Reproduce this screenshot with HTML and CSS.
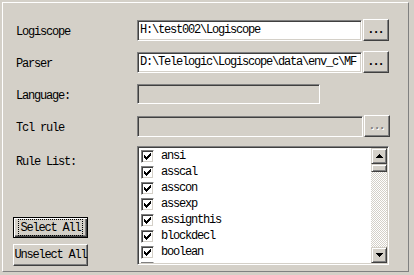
FILE: index.html
```html
<!DOCTYPE html>
<html>
<head>
<meta charset="utf-8">
<link rel="stylesheet" href="styles.css">
</head>
<body>
<div class="frame">
  <div class="row">
    <span class="label">Logiscope</span>
    <div class="ctl">
      <div class="field w-long">H:\test002\Logiscope</div>
      <div class="btn">...</div>
    </div>
  </div>
  <div class="row">
    <span class="label">Parser</span>
    <div class="ctl">
      <div class="field w-long">D:\Telelogic\Logiscope\data\env_c\MF</div>
      <div class="btn">...</div>
    </div>
  </div>
  <div class="row">
    <span class="label">Language:</span>
    <div class="ctl">
      <div class="field disabled w-short"></div>
    </div>
  </div>
  <div class="row">
    <span class="label">Tcl rule</span>
    <div class="ctl">
      <div class="field disabled w-tcl"></div>
      <div class="btn btn-disabled">...</div>
    </div>
  </div>
  <div class="row list-row">
    <div class="left">
      <span class="label rule-label">Rule List:</span>
      <div class="pbtn default"><span class="focus">Select All</span></div>
      <div class="pbtn unsel">Unselect All</div>
    </div>
    <div class="listbox">
      <ul class="items">
        <li><span class="cb"><svg width="7" height="7" viewBox="0 0 7 7" shape-rendering="crispEdges"><path d="M0 2h1v3H0zM1 3h1v3H1zM2 4h1v3H2zM3 3h1v3H3zM4 2h1v3H4zM5 1h1v3H5zM6 0h1v3H6z" fill="#000"/></svg></span>ansi</li>
        <li><span class="cb"><svg width="7" height="7" viewBox="0 0 7 7" shape-rendering="crispEdges"><path d="M0 2h1v3H0zM1 3h1v3H1zM2 4h1v3H2zM3 3h1v3H3zM4 2h1v3H4zM5 1h1v3H5zM6 0h1v3H6z" fill="#000"/></svg></span>asscal</li>
        <li><span class="cb"><svg width="7" height="7" viewBox="0 0 7 7" shape-rendering="crispEdges"><path d="M0 2h1v3H0zM1 3h1v3H1zM2 4h1v3H2zM3 3h1v3H3zM4 2h1v3H4zM5 1h1v3H5zM6 0h1v3H6z" fill="#000"/></svg></span>asscon</li>
        <li><span class="cb"><svg width="7" height="7" viewBox="0 0 7 7" shape-rendering="crispEdges"><path d="M0 2h1v3H0zM1 3h1v3H1zM2 4h1v3H2zM3 3h1v3H3zM4 2h1v3H4zM5 1h1v3H5zM6 0h1v3H6z" fill="#000"/></svg></span>assexp</li>
        <li><span class="cb"><svg width="7" height="7" viewBox="0 0 7 7" shape-rendering="crispEdges"><path d="M0 2h1v3H0zM1 3h1v3H1zM2 4h1v3H2zM3 3h1v3H3zM4 2h1v3H4zM5 1h1v3H5zM6 0h1v3H6z" fill="#000"/></svg></span>assignthis</li>
        <li><span class="cb"><svg width="7" height="7" viewBox="0 0 7 7" shape-rendering="crispEdges"><path d="M0 2h1v3H0zM1 3h1v3H1zM2 4h1v3H2zM3 3h1v3H3zM4 2h1v3H4zM5 1h1v3H5zM6 0h1v3H6z" fill="#000"/></svg></span>blockdecl</li>
        <li><span class="cb"><svg width="7" height="7" viewBox="0 0 7 7" shape-rendering="crispEdges"><path d="M0 2h1v3H0zM1 3h1v3H1zM2 4h1v3H2zM3 3h1v3H3zM4 2h1v3H4zM5 1h1v3H5zM6 0h1v3H6z" fill="#000"/></svg></span>boolean</li>
        <li><span class="cb"></span></li>
      </ul>
      <div class="vscroll">
        <div class="sbtn"><svg width="7" height="4" viewBox="0 0 7 4" shape-rendering="crispEdges"><path d="M3 0h1v1h1v1h1v1h1v1H0V3h1V2h1V1h1z" fill="#000"/></svg></div>
        <div class="thumb"></div>
        <div class="track"></div>
        <div class="sbtn"><svg width="7" height="4" viewBox="0 0 7 4" shape-rendering="crispEdges"><path d="M0 0h7v1H6v1H5v1H4v1H3V3H2V2H1V1H0z" fill="#000"/></svg></div>
      </div>
    </div>
  </div>
</div>
</body>
</html>
```
FILE: styles.css
```css
html, body {
  margin: 0;
  padding: 0;
}
body {
  background: #d4d0c8;
  font-family: "Liberation Mono", monospace;
  font-size: 12px;
  letter-spacing: -1.2px;
  color: #000;
  width: 414px;
  height: 275px;
  overflow: hidden;
}
.frame {
  box-sizing: border-box;
  margin: 2px 0 0 2px;
  width: 407px;
  height: 270px;
  border-top: 1px solid #fff;
  border-left: 1px solid #fff;
  border-right: 1px solid #808080;
  border-bottom: 1px solid #808080;
  padding: 16px 0 0 10px;
}
.row {
  display: grid;
  grid-template-columns: 124px auto;
  height: 22px;
  align-items: center;
  margin-bottom: 10px;
}
.label {
  padding-left: 3px;
  padding-top: 3px;
  white-space: nowrap;
}
.ctl {
  display: flex;
  align-items: center;
  gap: 1px;
}
.field {
  box-sizing: border-box;
  height: 21px;
  background: #fff;
  border-top: 1px solid #808080;
  border-left: 1px solid #808080;
  border-right: 1px solid #fff;
  border-bottom: 1px solid #fff;
  box-shadow: inset 1px 1px 0 #404040, inset -1px -1px 0 #d4d0c8;
  padding: 0 2px;
  line-height: 19px;
  white-space: nowrap;
  overflow: hidden;
}
.w-long { width: 225px; }
.w-short { width: 183px; height: 20px; }
.w-tcl { width: 226px; }
.field.disabled { background: #d4d0c8; }
.btn {
  box-sizing: border-box;
  width: 26px;
  height: 22px;
  border-top: 1px solid #fff;
  border-left: 1px solid #fff;
  border-right: 1px solid #404040;
  border-bottom: 1px solid #404040;
  box-shadow: inset -1px -1px 0 #808080;
  text-align: center;
  font-weight: bold;
  line-height: 20px;
  letter-spacing: -2px;
  text-indent: -2px;
}
.btn-disabled {
  color: #808080;
  text-shadow: 1px 1px 0 #fff;
}
.list-row {
  height: 119px;
  margin-top: -1px;
  align-items: stretch;
}
.left {
  display: flex;
  flex-direction: column;
  align-items: flex-start;
}
.rule-label {
  margin-top: 5px;
  line-height: 16px;
}
.pbtn {
  box-sizing: border-box;
  width: 75px;
  height: 21px;
  display: flex;
  align-items: center;
  justify-content: center;
  border-top: 1px solid #fff;
  border-left: 1px solid #fff;
  border-right: 1px solid #404040;
  border-bottom: 1px solid #404040;
  box-shadow: inset -1px -1px 0 #808080;
  white-space: nowrap;
}
.pbtn.default {
  margin-top: auto;
  border: 1px solid #000;
  box-shadow: inset 1px 1px 0 #fff, inset -1px -1px 0 #404040, inset -2px -2px 0 #808080;
}
.focus {
  outline: 1px dotted #000;
  outline-offset: 0;
  padding: 1px 1px 0 1px;
  line-height: 14px;
}
.pbtn.unsel {
  margin-top: 6px;
  height: 22px;
  margin-bottom: -1px;
}
.listbox {
  box-sizing: border-box;
  width: 252px;
  height: 119px;
  display: flex;
  background: #fff;
  border-top: 1px solid #808080;
  border-left: 1px solid #808080;
  border-right: 1px solid #fff;
  border-bottom: 1px solid #fff;
  box-shadow: inset 1px 1px 0 #404040, inset -1px -1px 0 #d4d0c8;
  padding: 1px;
}
.items {
  flex: 1;
  list-style: none;
  margin: 0;
  padding: 0;
  overflow: hidden;
}
.items li {
  height: 16px;
  display: flex;
  align-items: center;
  padding-left: 2px;
  gap: 7px;
  white-space: nowrap;
}
.cb {
  box-sizing: border-box;
  width: 13px;
  height: 13px;
  flex: none;
  background: #fff;
  border-top: 1px solid #808080;
  border-left: 1px solid #808080;
  border-right: 1px solid #fff;
  border-bottom: 1px solid #fff;
  box-shadow: inset 1px 1px 0 #404040, inset -1px -1px 0 #d4d0c8;
  display: flex;
  align-items: center;
  justify-content: center;
}
.cb svg { display: block; }
.vscroll {
  width: 16px;
  flex: none;
  display: flex;
  flex-direction: column;
}
.sbtn, .thumb {
  box-sizing: border-box;
  width: 16px;
  height: 16px;
  background: #d4d0c8;
  border-top: 1px solid #d4d0c8;
  border-left: 1px solid #d4d0c8;
  border-right: 1px solid #404040;
  border-bottom: 1px solid #404040;
  box-shadow: inset 1px 1px 0 #fff, inset -1px -1px 0 #808080;
  display: flex;
  align-items: center;
  justify-content: center;
}
.sbtn svg { display: block; }
.thumb { height: 8px; }
.track {
  flex: 1;
  background: repeating-conic-gradient(#d4d0c8 0 25%, #fff 0 50%) 0 0 / 2px 2px;
}
```
